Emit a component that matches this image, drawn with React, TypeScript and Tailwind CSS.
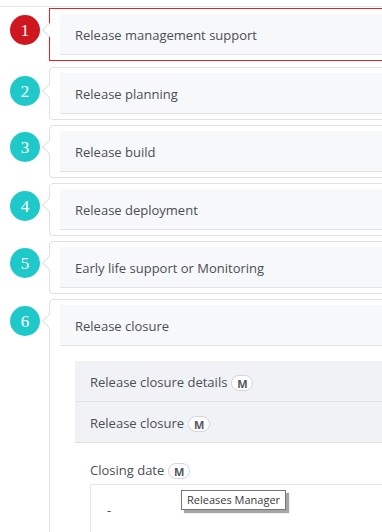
import React from "react";

const steps = [
  { n: "1", label: "Release management support", active: true, circleTop: "mt-[7px]" },
  { n: "2", label: "Release planning", active: false, circleTop: "mt-[9px]" },
  { n: "3", label: "Release build", active: false, circleTop: "mt-[7px]" },
  { n: "4", label: "Release deployment", active: false, circleTop: "mt-[8px]" },
  { n: "5", label: "Early life support or Monitoring", active: false, circleTop: "mt-[7px]" },
];

function Badge() {
  return (
    <span className="ml-[4px] inline-flex h-[16px] w-[22px] items-center justify-center rounded-full border border-[#d4d6da] bg-white text-[11px] font-bold leading-none text-[#55595f]">
      M
    </span>
  );
}

function Circle({ n, active, top }: { n: string; active: boolean; top: string }) {
  return (
    <div
      className={`${top} flex h-[30px] w-[30px] shrink-0 items-center justify-center rounded-full ${
        active ? "bg-[#d0161f]" : "bg-[#1fc9ca]"
      } font-['Liberation_Serif',serif] text-[17px] leading-none text-white`}
    >
      {n}
    </div>
  );
}

function Notch({ top }: { top: string }) {
  return (
    <div
      className={`absolute left-[-6px] ${top} h-[10px] w-[10px] rotate-45 border-b border-l border-[#dfe1e5] bg-white`}
    />
  );
}

export default function App() {
  return (
    <div className="relative h-[532px] w-[382px] overflow-hidden bg-white font-['Open_Sans',sans-serif] text-[13px] text-[#4a4f55]">
      <div className="h-[7px] border-b border-[#e4e6ea]" />
      <div className="flex w-[430px] flex-col gap-[5px] pt-[1px]">
        {steps.map((s) => (
          <div key={s.n} className={`flex items-start pl-[10px] ${s.active ? "mb-[1px]" : ""}`}>
            <Circle n={s.n} active={s.active} top={s.circleTop} />
            <div
              className={`relative ml-[9px] flex-1 border border-[#dfe1e5] bg-white px-[10px] py-[5px] ${
                s.active ? "rounded-none outline outline-1 -outline-offset-1 outline-[#d9252c]" : "rounded-[4px]"
              }`}
            >
              <Notch top={s.n === "2" ? "top-[18px]" : "top-[16px]"} />
              <div className="flex h-[41px] items-center border-b border-[#e1e3e7] bg-[#f7f8fa] pl-[15px] pt-[4px]">
                {s.label}
              </div>
            </div>
          </div>
        ))}
        <div className="flex items-start pl-[10px]">
          <Circle n="6" active={false} top="mt-[7px]" />
          <div className="relative ml-[9px] h-[260px] flex-1 rounded-[4px] border border-[#dfe1e5] bg-white px-[10px] pt-[5px]">
            <Notch top="top-[16px]" />
            <div className="flex h-[41px] items-center border-b border-[#e1e3e7] bg-[#f7f8fa] pl-[15px] pt-[4px]">
              Release closure
            </div>
            <div className="pl-[15px] pt-[15px]">
              <div className="bg-[#f1f2f5]">
                <div className="flex h-[41px] items-center border-b border-[#dfe1e5] pl-[15px] pt-[4px]">
                  Release closure details
                  <Badge />
                </div>
                <div className="flex h-[41px] items-center border-b border-[#dfe1e5] pl-[15px] pt-[4px]">
                  Release closure
                  <Badge />
                </div>
              </div>
              <div className="pl-[15px] pt-[19px]">
                <div className="flex h-[18px] items-center">
                  Closing date
                  <Badge />
                </div>
                <div className="mt-[4px] h-[80px] border border-[#e4e6ea] bg-white pl-[16px] pt-[16px]">
                  -
                </div>
              </div>
            </div>
          </div>
        </div>
      </div>
      <div className="absolute left-[181px] top-[490px] border border-[#767676] bg-white px-[5px] py-[1px] font-['Open_Sans',sans-serif] text-[11px] leading-[16px] text-[#3b3b3b] shadow-[3px_3px_1px_rgba(0,0,0,0.35)]">
        Releases Manager
      </div>
    </div>
  );
}
